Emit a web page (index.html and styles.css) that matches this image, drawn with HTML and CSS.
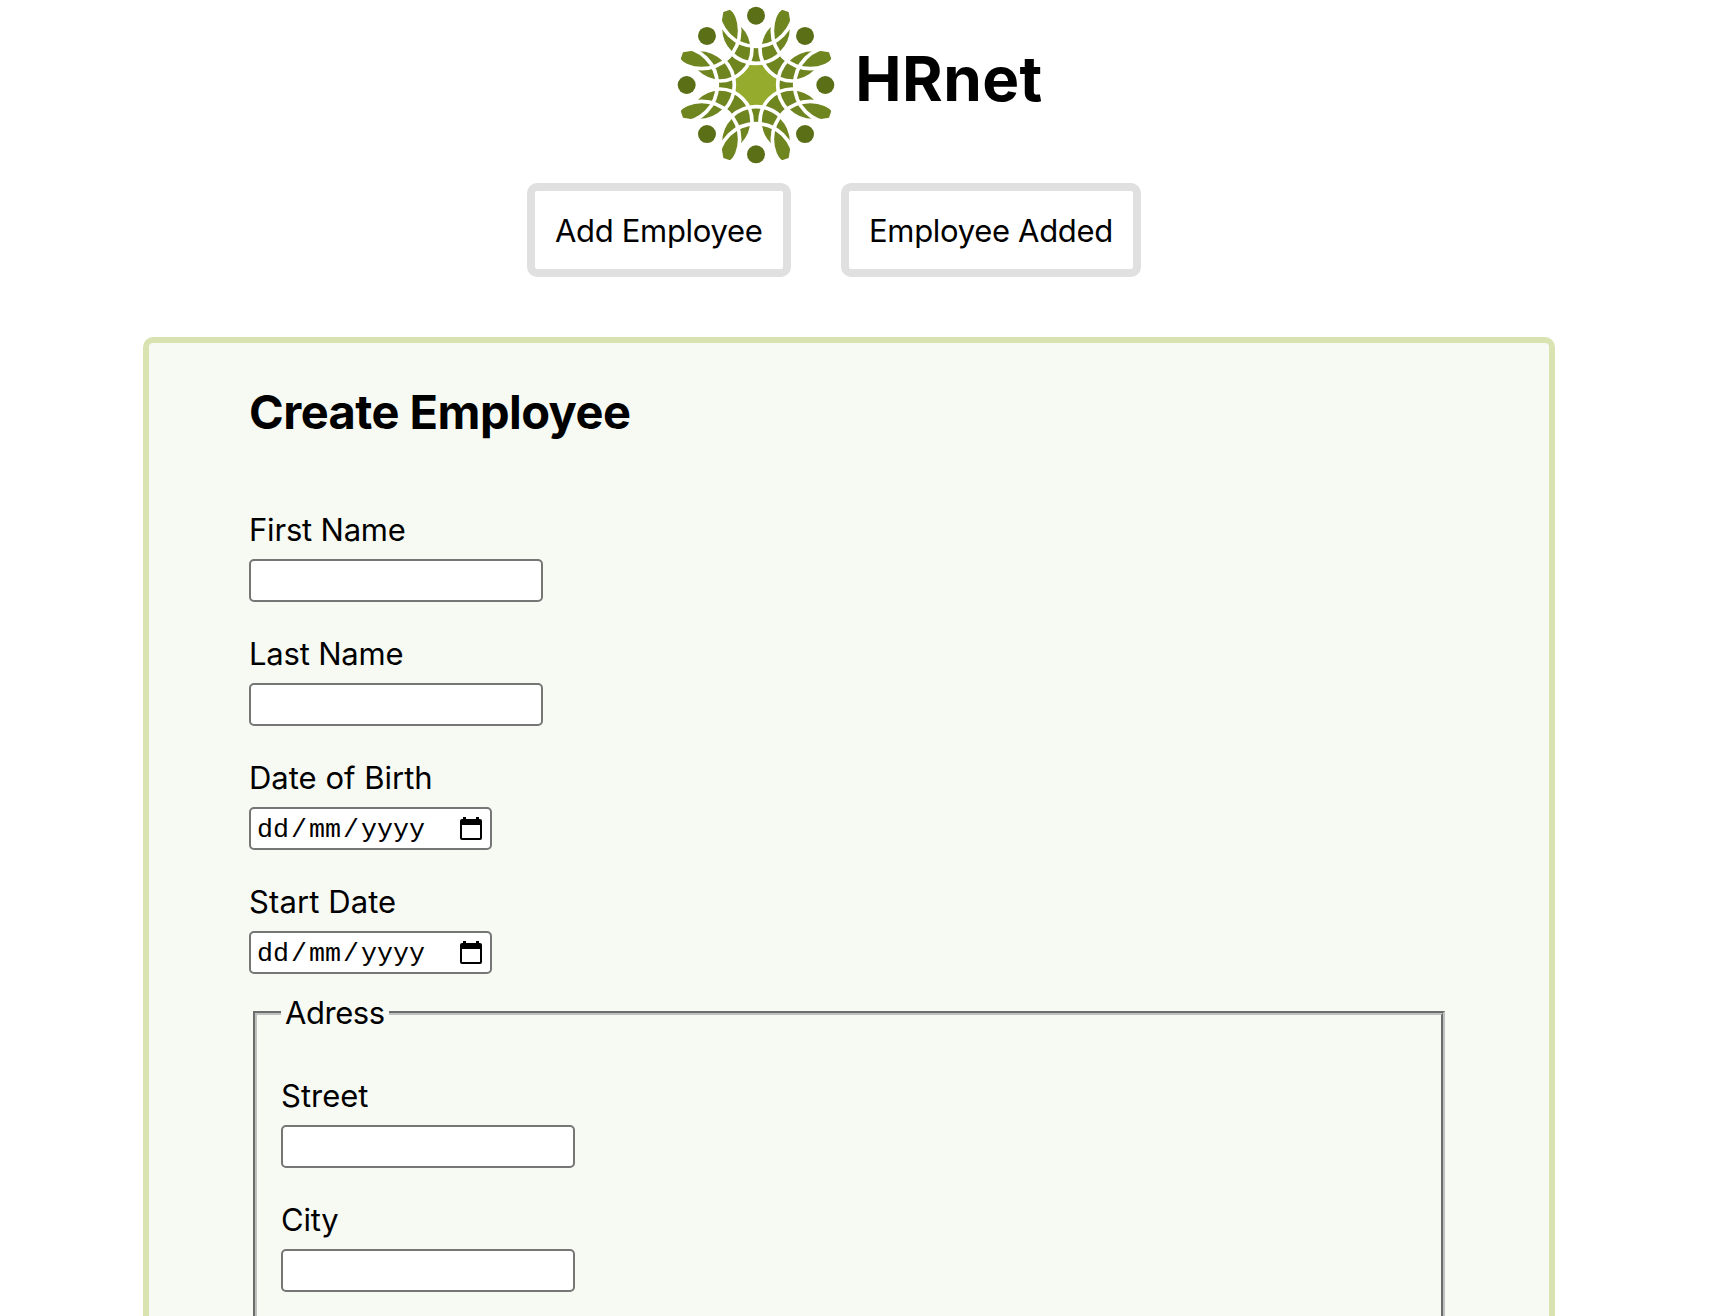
FILE: index.html
```html
<!DOCTYPE html>
<html lang="en">
<head>
<meta charset="utf-8">
<title>HRnet</title>
<link rel="stylesheet" href="styles.css">
</head>
<body>
<header class="header">
  <div class="brand">
    <svg class="logo" viewBox="-240 -240 480 480" aria-hidden="true">
      <defs>
        <clipPath id="arm"><circle cx="0" cy="-172" r="107"/></clipPath>
        <clipPath id="reach"><circle cx="0" cy="-230" r="114"/></clipPath>
        <clipPath id="tip"><path d="M40-120V-190L62-211L78-226L98-219L102-195L110-120Z"/></clipPath>
        <g id="base"><circle cx="0" cy="-172" r="107"/><circle cx="109" cy="-109" r="97"/></g>
        <g id="body"><circle cx="0" cy="-230" r="114"/><circle cx="163" cy="-163" r="114"/></g>
        <g id="lens" clip-path="url(#arm)"><circle cx="109" cy="-109" r="97"/></g>
        <g id="leaf" clip-path="url(#tip)"><g clip-path="url(#reach)"><circle cx="163" cy="-163" r="114"/></g></g>
        <circle id="dot" cx="0" cy="-208" r="27"/>
      </defs>
      <circle class="core" r="68"/>
      <g class="green"><use href="#base"/><use href="#base" transform="rotate(90)"/><use href="#base" transform="rotate(180)"/><use href="#base" transform="rotate(270)"/></g>
      <g class="white"><use href="#body"/><use href="#body" transform="rotate(90)"/><use href="#body" transform="rotate(180)"/><use href="#body" transform="rotate(270)"/></g>
      <g class="green"><g id="l2"><use href="#lens"/><use href="#lens" transform="rotate(90)"/><use href="#lens" transform="rotate(180)"/><use href="#lens" transform="rotate(270)"/></g><use href="#l2" transform="scale(-1,1)"/></g>
      <g class="line"><use href="#base"/><use href="#base" transform="rotate(90)"/><use href="#base" transform="rotate(180)"/><use href="#base" transform="rotate(270)"/></g>
      <g class="green"><g id="l3"><use href="#leaf"/><use href="#leaf" transform="rotate(90)"/><use href="#leaf" transform="rotate(180)"/><use href="#leaf" transform="rotate(270)"/></g><use href="#l3" transform="scale(-1,1)"/></g>
      <g class="line"><use href="#body"/><use href="#body" transform="rotate(90)"/><use href="#body" transform="rotate(180)"/><use href="#body" transform="rotate(270)"/></g>
      <g class="dots"><use href="#dot"/><use href="#dot" transform="rotate(45)"/><use href="#dot" transform="rotate(90)"/><use href="#dot" transform="rotate(135)"/><use href="#dot" transform="rotate(180)"/><use href="#dot" transform="rotate(225)"/><use href="#dot" transform="rotate(270)"/><use href="#dot" transform="rotate(315)"/></g>
    </svg>
    <h1 class="title">HRnet</h1>
  </div>
  <nav class="nav">
    <a class="nav-link nav-add"><span>Add Employee</span></a>
    <a class="nav-link nav-added"><span>Employee Added</span></a>
  </nav>
</header>
<main class="panel">
  <h2 class="heading"><span>Create Employee</span></h2>
  <form class="form">
    <div class="field"><label class="label tight" for="first">First Name</label><input class="input" id="first"></div>
    <div class="field"><label class="label tight" for="last">Last Name</label><input class="input" id="last"></div>
    <div class="field"><span class="label">Date of Birth</span>
      <div class="date"><span class="part">dd</span><span class="slash">/</span><span class="part">mm</span><span class="slash">/</span><span class="part">yyyy</span>
        <svg class="calendar" viewBox="0 0 22 24"><path fill-rule="evenodd" d="M3 0h3v2h10V0h3v2h1a2 2 0 0 1 2 2v17a2 2 0 0 1-2 2H2a2 2 0 0 1-2-2V4a2 2 0 0 1 2-2h1zM2 8v13h18V8z"/></svg></div></div>
    <div class="field"><span class="label loose">Start Date</span>
      <div class="date"><span class="part">dd</span><span class="slash">/</span><span class="part">mm</span><span class="slash">/</span><span class="part">yyyy</span>
        <svg class="calendar" viewBox="0 0 22 24"><path fill-rule="evenodd" d="M3 0h3v2h10V0h3v2h1a2 2 0 0 1 2 2v17a2 2 0 0 1-2 2H2a2 2 0 0 1-2-2V4a2 2 0 0 1 2-2h1zM2 8v13h18V8z"/></svg></div></div>
    <fieldset class="address">
      <legend class="legend">Adress</legend>
      <div class="field"><label class="label" for="street">Street</label><input class="input" id="street"></div>
      <div class="field last"><label class="label tight" for="city">City</label><input class="input" id="city"></div>
    </fieldset>
  </form>
</main>
</body>
</html>
```
FILE: styles.css
```css
* { box-sizing: border-box; }
body {
  margin: 0;
  background: #fff;
  color: #000;
  font-family: Inter, sans-serif;
  font-size: 31px;
  line-height: 38px;
}
.header { height: 337px; }
.brand { display: flex; padding: 4.5px 0 0 676.3px; height: 183px; }
.logo { width: 160px; height: 160px; flex: none; }
.title { margin: 36.5px 0 0 19px; font-size: 62px; line-height: 76px; font-weight: 700; letter-spacing: 0.4px; }
.green { fill: #6f8520; }
.white { fill: #fff; }
.core { fill: #94ab2d; }
.dots { fill: #5b6f17; }
.line { fill: none; stroke: #fff; stroke-width: 11; }
.nav { display: flex; gap: 50px; padding-left: 527px; }
.nav-link {
  height: 94px;
  border: 8px solid #e0e0e0;
  border-radius: 10px;
  padding: 21px 0 0 20px;
  white-space: nowrap;
  letter-spacing: -0.32px;
}
.nav-add { width: 264px; }
.nav-added { width: 300px; }
.panel {
  width: 1412px;
  height: 979px;
  margin-left: 143px;
  border: 6px solid #d9e2b1;
  border-bottom: 0;
  border-radius: 10px 10px 0 0;
  background: #f7faf3;
  padding: 40px 100px 0;
}
.heading { margin: 0 0 70px; font-size: 47px; line-height: 58px; font-weight: 700; letter-spacing: -0.55px; }
.field { height: 124px; }
.last { height: 91px; }
.label { display: block; height: 48px; }
.tight { letter-spacing: -0.2px; }
.loose { letter-spacing: 0.1px; }
.input, .date {
  display: block;
  width: 294px;
  height: 43px;
  border: 2px solid #767676;
  border-radius: 5px;
  background: #fff;
  padding: 0;
}
.date {
  display: flex;
  align-items: center;
  width: 243px;
  padding-left: 6px;
  font: 26.67px/38px "Liberation Mono", monospace;
}
.part, .slash { padding-top: 3px; }
.slash { width: 20px; text-align: center; }
.calendar { width: 22px; height: 24px; margin-left: 35px; }
.address {
  width: 1192px;
  height: 322px;
  margin: -13px 0 0 4px;
  border: 4px groove #c0c0c0;
  border-bottom: 0;
  padding: 45px 24px 0;
}
.legend { padding: 0 4px; letter-spacing: -0.45px; }
```
